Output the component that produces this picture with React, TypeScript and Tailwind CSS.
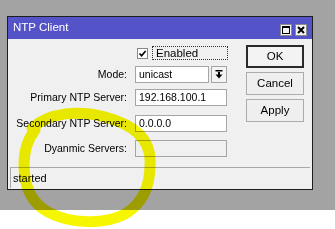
import React from 'react';

function Field({ label, value, disabled, className }: { label: string; value?: string; disabled?: boolean; className?: string }) {
  return (
    <div className={`flex items-center ${className ?? ''}`}>
      <div className="w-[121px] pr-[2px] text-right whitespace-nowrap">{label}</div>
      <div
        className={`ml-[6px] h-[17px] w-[92px] border border-[#a5a5a5] px-[3px] leading-[15px] ${
          disabled ? 'bg-[#f0f0f0]' : 'bg-white'
        }`}
      >
        {value}
      </div>
    </div>
  );
}

function Btn({ label, primary }: { label: string; primary?: boolean }) {
  return (
    <div
      className={`flex h-[23px] w-[58px] items-center justify-center text-[11.5px] ${
        primary ? 'border-2 border-[#2a2a2a] bg-[#f3f3f3]' : 'border border-[#acacac] bg-[#efefef]'
      }`}
    >
      {label}
    </div>
  );
}

export default function App() {
  return (
    <div className="relative h-[229px] w-[335px] overflow-hidden bg-white font-['Liberation_Sans',Arial,sans-serif] text-[10.5px] text-black">
      <div className="h-[210px] bg-[#a3a3a3] pl-[7px] pt-[16px]">
        <div className="flex h-[174px] w-[306px] flex-col border border-[#1e1e1e] bg-[#f0f0f0]">
          {/* title bar */}
          <div className="flex h-[22px] items-center justify-between bg-[#5454c8] pl-[5px] pr-[5px]">
            <span className="text-[11.5px] text-white">NTP Client</span>
            <div className="mt-[3px] flex gap-[3px]">
              <div className="flex h-[12px] w-[12px] items-center justify-center border border-[#8a8a8a] bg-[#f4f4f4]">
                <div className="h-[8px] w-[8px] border border-t-2 border-black" />
              </div>
              <div className="flex h-[12px] w-[12px] items-center justify-center border border-[#8a8a8a] bg-[#f4f4f4]">
                <svg width="8" height="8" viewBox="0 0 8 8">
                  <path d="M1 1 L7 7 M7 1 L1 7" stroke="#000" strokeWidth="2" />
                </svg>
              </div>
            </div>
          </div>

          {/* body */}
          <div className="flex flex-1">
            <div className="flex flex-col pt-[7px]">
              <div className="flex h-[14px] items-center">
                <div className="ml-[129px] flex h-[11px] w-[11px] items-center justify-center border border-[#888] bg-white">
                  <svg width="9" height="9" viewBox="0 0 9 9">
                    <path d="M1.5 4.5 L3.6 6.8 L7.6 2" stroke="#000" strokeWidth="1.7" fill="none" />
                  </svg>
                </div>
                <div className="ml-[4px] h-[14px] w-[76px] border border-dotted border-[#333] pl-[3px] text-[11.5px] leading-[12px]">
                  Enabled
                </div>
              </div>

              <div className="mt-[6px] flex items-center">
                <div className="w-[121px] pr-[2px] text-right">Mode:</div>
                <div className="ml-[6px] h-[17px] w-[74px] border border-[#a5a5a5] bg-white px-[3px] leading-[15px]">unicast</div>
                <div className="ml-[2px] flex h-[17px] w-[16px] items-center justify-center border border-[#a5a5a5] bg-[#f4f4f4]">
                  <svg width="8" height="9" viewBox="0 0 8 9">
                    <rect x="0.5" y="0" width="7" height="1.5" fill="#000" />
                    <rect x="3" y="2" width="2" height="3" fill="#000" />
                    <path d="M0.5 4.5 L7.5 4.5 L4 8.5 Z" fill="#000" />
                  </svg>
                </div>
              </div>

              <Field className="mt-[6px]" label="Primary NTP Server:" value="192.168.100.1" />
              <Field className="mt-[9px]" label="Secondary NTP Server:" value="0.0.0.0" />
              <Field className="mt-[8px]" label="Dyanmic Servers:" disabled />
            </div>

            <div className="ml-[18px] flex flex-col gap-[4px] pt-[6px]">
              <Btn label="OK" primary />
              <Btn label="Cancel" />
              <Btn label="Apply" />
            </div>
          </div>

          {/* status bar */}
          <div className="mx-[2px] mb-[1px] flex h-[21px] items-center border-l border-t border-[#a8a8a8] pl-[2px] text-[11px]">
            started
          </div>
        </div>
      </div>

      {/* yellow marker circle */}
      <svg className="pointer-events-none absolute left-0 top-0 mix-blend-multiply" width="335" height="229" viewBox="0 0 335 229">
        <path
          d="M32 128 C50 112, 80 110, 105 117 C135 125, 152 140, 150 165 C150 190, 140 205, 125 214 C105 225, 70 224, 48 212 C30 202, 24 185, 24 165 C24 150, 27 140, 35 130"
          fill="none"
          stroke="#f6f600"
          strokeWidth="11"
          strokeLinecap="round"
          strokeLinejoin="round"
        />
      </svg>
    </div>
  );
}
